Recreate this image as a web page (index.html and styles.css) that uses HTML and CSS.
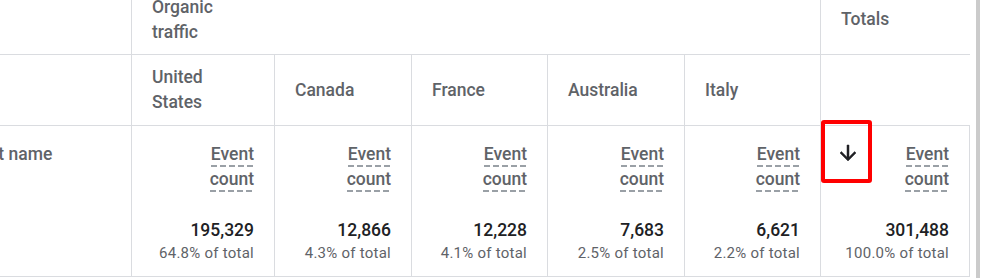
FILE: index.html
```html
<!DOCTYPE html>
<html lang="en">
<head>
<meta charset="utf-8">
<title>Event count by country</title>
<link rel="stylesheet" href="styles.css">
</head>
<body>
<div class="page">
  <div class="table">
    <div class="cell r1"></div>
    <div class="cell r1 group"><span class="group-label">Organic traffic</span></div>
    <div class="cell r1 totals-h last">Totals</div>

    <div class="cell r2"></div>
    <div class="cell r2"><span class="country">United States</span></div>
    <div class="cell r2">Canada</div>
    <div class="cell r2">France</div>
    <div class="cell r2">Australia</div>
    <div class="cell r2">Italy</div>
    <div class="cell r2 last"></div>

    <div class="cell r3 dim">Event name</div>
    <div class="cell r3 data">
      <div class="stack">
        <span class="dash">Event</span><span class="dash">count</span>
        <div class="value">195,329</div>
        <div class="pct">64.8% of total</div>
      </div>
    </div>
    <div class="cell r3 data">
      <div class="stack">
        <span class="dash">Event</span><span class="dash">count</span>
        <div class="value">12,866</div>
        <div class="pct">4.3% of total</div>
      </div>
    </div>
    <div class="cell r3 data">
      <div class="stack">
        <span class="dash">Event</span><span class="dash">count</span>
        <div class="value">12,228</div>
        <div class="pct">4.1% of total</div>
      </div>
    </div>
    <div class="cell r3 data">
      <div class="stack">
        <span class="dash">Event</span><span class="dash">count</span>
        <div class="value">7,683</div>
        <div class="pct">2.5% of total</div>
      </div>
    </div>
    <div class="cell r3 data">
      <div class="stack">
        <span class="dash">Event</span><span class="dash">count</span>
        <div class="value">6,621</div>
        <div class="pct">2.2% of total</div>
      </div>
    </div>
    <div class="cell r3 data total">
      <div class="stack wide">
        <div class="metric-row">
          <svg class="sort" viewBox="0 0 24 24" width="24" height="24" aria-hidden="true">
            <path d="M20 12l-1.41-1.41L13 16.17V4h-2v12.17l-5.58-5.59L4 12l8 8 8-8z"/>
          </svg>
          <div class="metric">
            <span class="dash">Event</span><span class="dash">count</span>
          </div>
        </div>
        <div class="value">301,488</div>
        <div class="pct">100.0% of total</div>
      </div>
      <div class="annot"></div>
    </div>
  </div>
  <div class="rail"></div>
</div>
</body>
</html>
```

FILE: styles.css
```css
html, body {
  margin: 0;
  padding: 0;
  background: #ffffff;
}

body {
  width: 982px;
  height: 278px;
  overflow: hidden;
  font-family: Roboto, "Noto Sans", Arial, sans-serif;
}

.page {
  display: flex;
  margin-top: -5px;
  margin-left: -59px;
  height: 290px;
}

.table {
  display: grid;
  grid-template-columns: 191px 143px 137px 136px 137px 136px 149px;
  grid-template-rows: 60px 71px 151px;
  flex: none;
}

.cell {
  box-sizing: border-box;
  border-style: solid;
  border-color: #dadce0;
  border-width: 0 1px 1px 0;
  padding: 0 20px;
  color: #5f6368;
  font-size: 17.5px;
  font-weight: 500;
  line-height: 25px;
}

.cell.last {
  border-right-width: 0;
}

.group {
  grid-column: 2 / 7;
}

.group-label {
  display: block;
  width: 80px;
}

.totals-h {
  padding-top: 11.5px;
}

.r2 {
  display: flex;
  align-items: center;
}

.country {
  display: block;
  width: 100px;
}

.r3.dim {
  padding-top: 15.5px;
  white-space: nowrap;
}

.data {
  display: flex;
  justify-content: flex-end;
  padding-top: 15.5px;
  position: relative;
}

.stack {
  display: flex;
  flex-direction: column;
  align-items: flex-end;
  text-align: right;
  white-space: nowrap;
}

.stack.wide {
  flex: 1;
}

.metric-row {
  align-self: stretch;
  display: flex;
  justify-content: space-between;
  align-items: flex-start;
}

.metric {
  display: flex;
  flex-direction: column;
  align-items: flex-end;
}

.dash {
  display: inline-block;
  background-image: repeating-linear-gradient(90deg, #9aa0a6 0 6px, transparent 6px 9px);
  background-repeat: no-repeat;
  background-size: 100% 2px;
  background-position: left bottom;
}

.value {
  margin-top: 26px;
  color: #202124;
  font-weight: 500;
}

.pct {
  font-size: 15px;
  font-weight: 400;
  line-height: 20px;
  letter-spacing: 0.25px;
}

.total {
  padding-left: 15px;
}

.sort {
  display: block;
  fill: #202124;
  stroke: #202124;
  stroke-width: 0.5;
  margin-top: -1px;
  flex: none;
}

.annot {
  position: absolute;
  left: 0;
  top: -6px;
  width: 51px;
  height: 63px;
  box-sizing: border-box;
  border: 4px solid #ff0000;
  border-radius: 3px;
}

.rail {
  flex: none;
  width: 4px;
  margin-left: 6px;
  background: #cbcbcb;
}
```
